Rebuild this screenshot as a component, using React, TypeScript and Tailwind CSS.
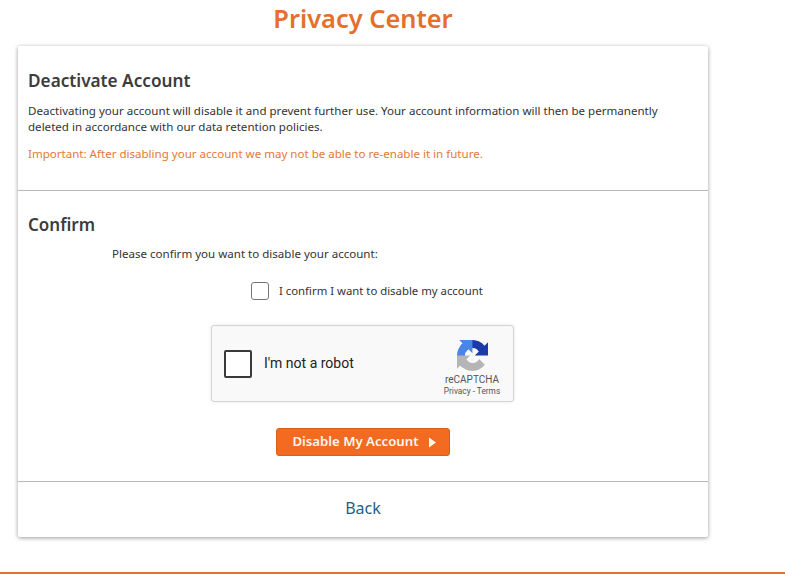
export default function App() {
  return (
    <div className="h-[574px] w-[785px] overflow-hidden bg-white font-['Noto_Sans',sans-serif] flex flex-col">
      <div className="ml-[18px] w-[690px] flex-1">
        <h1 className="h-[46px] pt-[1px] text-center text-[25.4px] leading-[34px] font-semibold text-[#e56f2c]">
          Privacy Center
        </h1>

        <div className="h-[491px] rounded-[2px] bg-white shadow-[0_1px_4px_rgba(0,0,0,0.4)]">
          {/* Deactivate section */}
          <div className="h-[145px] border-b border-[#b8b8b8] pt-[23px] pr-[40px] pl-[10px]">
            <h2 className="text-[17.2px] leading-[24px] font-semibold text-[#3c3c3c]">
              Deactivate Account
            </h2>
            <p className="mt-[10px] text-[11.57px] leading-[16px] text-[#333]">
              Deactivating your account will disable it and prevent further use. Your account information will then be
              permanently deleted in accordance with our data retention policies.
            </p>
            <p className="mt-[11px] text-[11.55px] leading-[16px] text-[#e27a36]">
              Important: After disabling your account we may not be able to re-enable it in future.
            </p>
          </div>

          {/* Confirm section */}
          <div className="h-[291px] border-b border-[#b8b8b8] pt-[22px]">
            <h2 className="px-[10px] text-[17px] leading-[24px] font-semibold text-[#3c3c3c]">Confirm</h2>
            <p className="mt-[9px] pl-[94px] text-[11.55px] leading-[16px] text-[#333]">
              Please confirm you want to disable your account:
            </p>

            <div className="mt-[20px] flex items-center pl-[233px]">
              <span className="h-[18px] w-[18px] rounded-[3px] border border-[#767676] bg-white" />
              <span className="ml-[10px] text-[11.35px] leading-[16px] text-[#333]">
                I confirm I want to disable my account
              </span>
            </div>

            {/* reCAPTCHA box */}
            <div className="mt-[25px] ml-[193px] flex h-[77px] w-[303px] items-center rounded-[3px] border border-[#d3d3d3] bg-[#f9f9f9] pr-[11px] pl-[12px] shadow-[0_0_4px_rgba(0,0,0,0.08)]">
              <span className="h-[28px] w-[28px] rounded-[2px] border-2 border-[#3a3a3a] bg-white" />
              <span className="ml-[12px] font-['Roboto',sans-serif] text-[14px] text-[#222]">I'm not a robot</span>
              <div className="ml-auto flex w-[60px] flex-col items-center pt-[9px] font-['Roboto',sans-serif] text-[#555]">
                <svg viewBox="0 0 64 64" className="h-[31px] w-[31px]">
                  <path fill="#1c3aa9" d="M64 31.955l-.033-1.37V4.687l-7.16 7.16C50.948 4.674 42.033.093 32.05.093c-10.4 0-19.622 4.96-25.458 12.64l11.736 11.86a15.55 15.55 0 0 1 4.754-5.334c2.05-1.6 4.952-2.906 8.968-2.906.485 0 .86.057 1.135.163 4.976.393 9.288 3.14 11.828 7.124l-8.307 8.307 26.295.01" />
                  <path fill="#4a85e8" d="M31.862.094l-1.37.033H4.594l7.16 7.16C4.58 13.14 0 22.054 0 32.037c0 10.4 4.96 19.622 12.64 25.458l11.86-11.736a15.55 15.55 0 0 1-5.334-4.754c-1.6-2.05-2.906-4.952-2.906-8.968 0-.485.057-.86.163-1.135.393-4.976 3.14-9.288 7.124-11.828l8.307 8.307.01-26.295" />
                  <path fill="#b5b5b5" d="M.001 32.03l.033 1.37v25.898l7.16-7.16c5.86 7.173 14.774 11.754 24.757 11.754 10.4 0 19.622-4.96 25.458-12.64L45.673 39.393a15.55 15.55 0 0 1-4.754 5.334c-2.05 1.6-4.952 2.906-8.968 2.906-.485 0-.86-.057-1.135-.163-4.976-.393-9.288-3.14-11.828-7.124l8.307-8.307-26.295-.01" />
                </svg>
                <span className="mt-[2px] text-[10px] leading-[13px]">reCAPTCHA</span>
                <span className="text-[8.3px] leading-[11px]">Privacy - Terms</span>
              </div>
            </div>

            <div className="mt-[26px] flex justify-center">
              <button className="flex h-[28px] w-[174px] items-center justify-center gap-[10px] rounded-[3px] border border-[#d9601c] bg-[#f26b21] pl-[2px] text-[13.2px] font-semibold text-[#fff6ee]">
                Disable My Account
                <svg viewBox="0 0 7 10" className="h-[11px] w-[7px]">
                  <path d="M0 0 L7 5 L0 10 Z" fill="#fff6ee" />
                </svg>
              </button>
            </div>
          </div>

          <div className="flex h-[54px] items-center justify-center pb-[2px] text-[16px] text-[#1f5f85]">Back</div>
        </div>
      </div>
      <div className="h-[2px] bg-[#e8702a]" />
    </div>
  );
}
